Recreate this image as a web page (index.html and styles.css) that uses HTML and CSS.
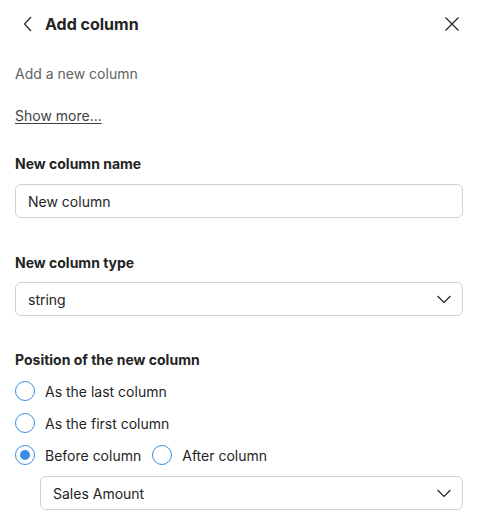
FILE: index.html
```html
<!DOCTYPE html>
<html>
<head>
<meta charset="utf-8">
<link rel="stylesheet" href="styles.css">
</head>
<body>
<div class="panel">
  <div class="header">
    <button class="icon-btn back" aria-label="Back">
      <svg width="10" height="16" viewBox="0 0 10 16"><path d="M8 1 L1.5 8 L8 15" fill="none" stroke="#242424" stroke-width="1.2"/></svg>
    </button>
    <h1 class="title">Add column</h1>
    <button class="icon-btn close" aria-label="Close">
      <svg width="16" height="16" viewBox="0 0 16 16"><path d="M1.5 1.5 L14.5 14.5 M14.5 1.5 L1.5 14.5" fill="none" stroke="#242424" stroke-width="1.2"/></svg>
    </button>
  </div>
  <p class="desc">Add a new column</p>
  <a class="more" href="#">Show more...</a>

  <div class="field f-name">
    <label class="label">New column name</label>
    <div class="input">New column</div>
  </div>

  <div class="field f-type">
    <label class="label">New column type</label>
    <div class="input select">
      <span>string</span>
      <svg class="chev" width="16" height="10" viewBox="0 0 16 10"><path d="M1.5 2 L8 8.5 L14.5 2" fill="none" stroke="#242424" stroke-width="1.2"/></svg>
    </div>
  </div>

  <div class="field f-pos">
    <label class="label">Position of the new column</label>
    <div class="radios">
      <div class="radio"><span class="dot"></span><span>As the last column</span></div>
      <div class="radio"><span class="dot"></span><span>As the first column</span></div>
      <div class="radio-row">
        <div class="radio"><span class="dot checked"></span><span>Before column</span></div>
        <div class="radio"><span class="dot"></span><span>After column</span></div>
      </div>
    </div>
    <div class="input select sub">
      <span>Sales Amount</span>
      <svg class="chev" width="16" height="10" viewBox="0 0 16 10"><path d="M1.5 2 L8 8.5 L14.5 2" fill="none" stroke="#242424" stroke-width="1.2"/></svg>
    </div>
  </div>
</div>
</body>
</html>
```
FILE: styles.css
```css
* { box-sizing: border-box; }
body {
  margin: 0;
  background: #fff;
  font-family: Inter, "Noto Sans", sans-serif;
  color: #242424;
  font-size: 14px;
}
.panel {
  padding: 0 14px 0 15px;
}
.header {
  display: flex;
  align-items: center;
  height: 47px;
}
.icon-btn {
  background: none;
  border: 0;
  padding: 0;
  display: flex;
  align-items: center;
  justify-content: center;
}
.back {
  width: 16px;
  margin-left: 5px;
  margin-right: 9px;
}
.title {
  margin: 0;
  font-size: 16px;
  font-weight: 700;
  flex: 1;
}
.close {
  width: 16px;
  margin-right: 3px;
}
.desc {
  margin: 17px 0 0;
  color: #616161;
  line-height: 20px;
}
.more {
  display: inline-block;
  margin-top: 22px;
  color: #424242;
  line-height: 20px;
  text-decoration: underline;
  text-underline-offset: 2px;
}
.f-name { margin-top: 28px; }
.f-type { margin-top: 35px; }
.f-pos { margin-top: 34px; }
.label {
  display: block;
  font-weight: 700;
  line-height: 20px;
}
.input {
  margin-top: 10px;
  height: 34px;
  border: 1px solid #d1d1d1;
  border-radius: 6px;
  padding: 0 12px;
  display: flex;
  align-items: center;
  color: #242424;
}
.f-type .input { margin-top: 9px; }
.select {
  justify-content: space-between;
}
.chev { margin-right: -2px; }
.radios {
  margin-top: 11px;
  display: flex;
  flex-direction: column;
  gap: 12px;
}
.radio {
  display: flex;
  align-items: center;
  gap: 10px;
  height: 20px;
}
.radio-row {
  display: flex;
  gap: 11px;
}
.dot {
  width: 20px;
  height: 20px;
  border: 1px solid #3a8ee6;
  border-radius: 50%;
  position: relative;
}
.dot.checked::after {
  content: "";
  position: absolute;
  left: 4px;
  top: 4px;
  width: 10px;
  height: 10px;
  border-radius: 50%;
  background: #3a8ee6;
}
.sub {
  margin-top: 11px;
  margin-left: 25px;
}
```
